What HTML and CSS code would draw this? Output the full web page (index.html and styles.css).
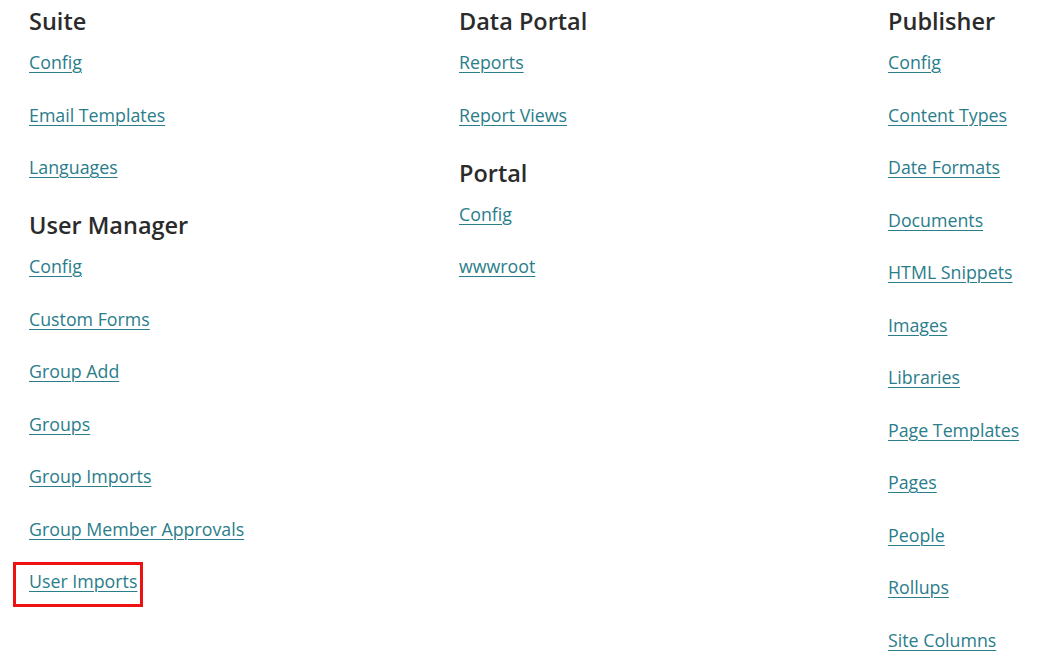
FILE: index.html
```html
<!DOCTYPE html>
<html lang="en">
<head>
<meta charset="utf-8">
<title>Admin</title>
<link rel="stylesheet" href="styles.css">
</head>
<body>
<div class="grid">
  <div class="col">
    <section class="group">
      <h2>Suite</h2>
      <ul>
        <li><a href="#">Config</a></li>
        <li><a href="#">Email Templates</a></li>
        <li><a href="#">Languages</a></li>
      </ul>
    </section>
    <section class="group">
      <h2>User Manager</h2>
      <ul>
        <li><a href="#">Config</a></li>
        <li><a href="#">Custom Forms</a></li>
        <li><a href="#">Group Add</a></li>
        <li><a href="#">Groups</a></li>
        <li><a href="#">Group Imports</a></li>
        <li><a href="#">Group Member Approvals</a></li>
        <li class="highlight"><a href="#">User Imports</a></li>
      </ul>
    </section>
  </div>
  <div class="col">
    <section class="group">
      <h2>Data Portal</h2>
      <ul>
        <li><a href="#">Reports</a></li>
        <li><a href="#">Report Views</a></li>
      </ul>
    </section>
    <section class="group">
      <h2>Portal</h2>
      <ul>
        <li><a href="#">Config</a></li>
        <li><a href="#">wwwroot</a></li>
      </ul>
    </section>
  </div>
  <div class="col">
    <section class="group">
      <h2>Publisher</h2>
      <ul>
        <li><a href="#">Config</a></li>
        <li><a href="#">Content Types</a></li>
        <li><a href="#">Date Formats</a></li>
        <li><a href="#">Documents</a></li>
        <li><a href="#">HTML Snippets</a></li>
        <li><a href="#">Images</a></li>
        <li><a href="#">Libraries</a></li>
        <li><a href="#">Page Templates</a></li>
        <li><a href="#">Pages</a></li>
        <li><a href="#">People</a></li>
        <li><a href="#">Rollups</a></li>
        <li><a href="#">Site Columns</a></li>
      </ul>
    </section>
  </div>
</div>
</body>
</html>
```
FILE: styles.css
```css
html, body {
  margin: 0;
  padding: 0;
  background: #ffffff;
}
body {
  font-family: "Open Sans", "Noto Sans", sans-serif;
  color: #2b2b2b;
  overflow: hidden;
}
.grid {
  display: grid;
  grid-template-columns: 430px 429px 1fr;
  padding: 6px 0 0 29px;
}
.col {
  display: flex;
  flex-direction: column;
  gap: 29px;
}
.group h2 {
  margin: 0 0 13px;
  font-size: 23.5px;
  line-height: 30px;
  font-weight: 600;
  color: #2b2b2b;
}
.group ul {
  list-style: none;
  margin: 0;
  padding: 0;
  display: flex;
  flex-direction: column;
  gap: 25.5px;
}
.group li {
  line-height: 27px;
  font-size: 17.8px;
}
.group a {
  color: #2a7d8a;
  text-decoration: underline;
  text-underline-offset: 3px;
  text-decoration-thickness: 1px;
}
.highlight {
  position: relative;
}
.highlight::before {
  content: "";
  position: absolute;
  left: -16px;
  top: -6px;
  width: 124px;
  height: 39px;
  border: 3.5px solid #ee1111;
}
```
